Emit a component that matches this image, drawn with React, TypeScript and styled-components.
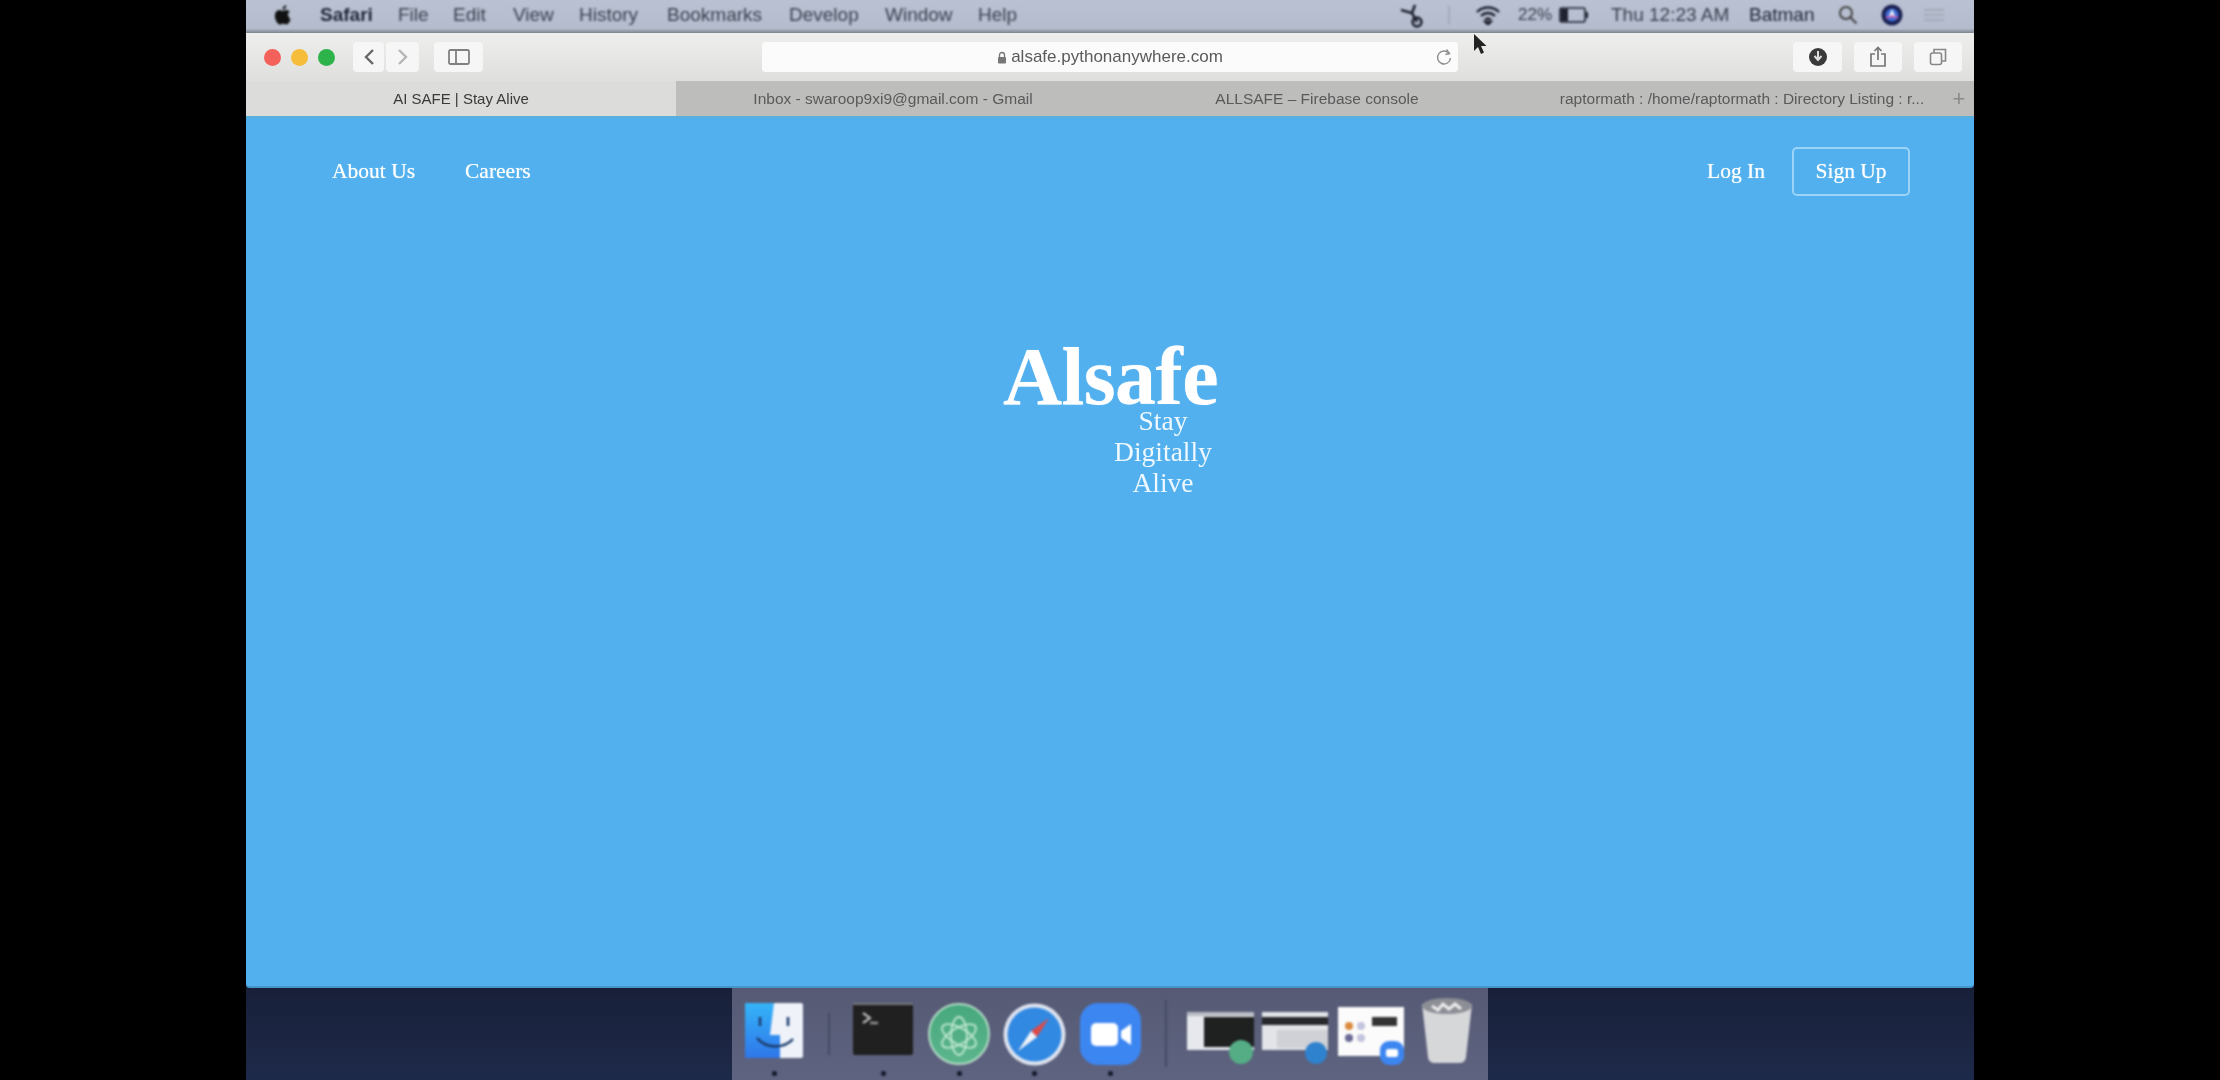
import React from "react";
import styled, { createGlobalStyle } from "styled-components";

const Global = createGlobalStyle`
  html, body { margin: 0; padding: 0; background: #000; }
  * { box-sizing: border-box; }
`;

const Screen = styled.div`
  width: 2220px; height: 1080px; background: #000; display: flex; justify-content: center; overflow: hidden;
`;
const Desktop = styled.div`
  width: 1728px; height: 1080px; display: flex; flex-direction: column;
  background: #1c2540;
`;
const MenuBar = styled.div`
  height: 33px; flex: none; display: flex;
  background: linear-gradient(#b9c1d2, #b4bccd 86%, #7d8490);
`;
const MenuContent = styled.div`
  flex: 1; display: flex; align-items: center; padding: 0 30px 4px 26px;
  font: 19px "Liberation Sans", sans-serif; color: #3c4150; filter: blur(0.8px);
`;
const MenuItem = styled.span<{ $bold?: boolean; $dark?: boolean; $w: number; $size?: number }>`
  width: ${p => p.$w}px; font-weight: ${p => (p.$bold ? 700 : 400)}; white-space: nowrap; flex: none;
  color: ${p => (p.$bold || p.$dark ? "#22263a" : "#3c4150")};
  font-size: ${p => p.$size ?? 19}px;
`;
const MenuGlyph = styled.svg<{ $mr?: number }>`
  flex: none; margin-right: ${p => p.$mr ?? 0}px;
`;
const MenuSep = styled.span`
  width: 2px; height: 18px; background: #a4abbb; margin: 0 25px; flex: none;
`;
const Spacer = styled.div`flex: 1;`;
const Toolbar = styled.div`
  height: 48px; flex: none; display: flex;
  background: linear-gradient(#eeefed, #dfe0de);
`;
const ToolContent = styled.div`
  flex: 1; display: flex; align-items: center; padding: 0 12px 0 18px; position: relative; filter: blur(0.6px);
`;
const Light = styled.span<{ $c: string; $mr: number }>`
  width: 17px; height: 17px; border-radius: 50%; background: ${p => p.$c}; margin-right: ${p => p.$mr}px; flex: none;
`;
const ToolBtn = styled.div<{ $w: number; $mr?: number }>`
  width: ${p => p.$w}px; height: 30px; background: #f6f6f6; border-radius: 4px; display: flex; align-items: center; justify-content: center;
  margin-right: ${p => p.$mr ?? 0}px; flex: none; color: #666;
`;
const Address = styled.div`
  width: 696px; height: 30px; margin-left: 279px; background: #fbfbfb; border-radius: 4px; display: flex; align-items: center; justify-content: center;
  font: 17px "Liberation Sans", sans-serif; color: #5a5a5a; position: relative; flex: none; gap: 4px;
`;
const Reload = styled.span`
  position: absolute; right: 5px; top: 6px; display: flex; color: #8a8a8a;
`;
const Cursor = styled.svg`
  position: absolute; left: 1226px; top: 0;
`;
const TabBar = styled.div`
  height: 35px; flex: none; display: flex; background: #bdbdbc;
`;
const TabContent = styled.div`
  flex: 1; display: flex; font: 15.5px "Liberation Sans", sans-serif; color: #5a5a5a; filter: blur(0.7px);
`;
const Tab = styled.div<{ $active?: boolean; $w: number; $pl?: number }>`
  width: ${p => p.$w}px; flex: none; display: flex; align-items: center; justify-content: center; white-space: nowrap;
  padding-left: ${p => p.$pl ?? 0}px;
  background: ${p => (p.$active ? "#dcdcda" : "transparent")}; color: ${p => (p.$active ? "#3a3a3a" : "#5a5a5a")};
  font-size: ${p => (p.$active ? 15 : 15.5)}px;
`;
const Plus = styled.div`flex: 1; display: flex; align-items: center; justify-content: center; font-size: 22px; color: #8a8a8a;`;
const Page = styled.main`
  height: 872px; flex: none; background: #52b0ee; position: relative; color: #fff;
  font-family: "Liberation Serif", serif; border-top: 2px solid #5eaedb; border-bottom: 2px solid #4596cf;
  border-radius: 0 0 4px 4px;
`;
const Nav = styled.nav`
  display: flex; align-items: center; padding: 29px 64px 0 86px; font-size: 21.5px; filter: blur(0.6px);
  text-shadow: 0 0 1px rgba(255, 255, 255, 0.7);
`;
const NavLink = styled.span<{ $mr: number }>`
  margin-right: ${p => p.$mr}px; white-space: nowrap;
`;
const SignUp = styled.span`
  width: 118px; height: 49px; border: 2px solid #9bd4f8; border-radius: 5px; display: flex; align-items: center; justify-content: center; white-space: nowrap;
`;
const Hero = styled.div`
  position: absolute; left: 757px; top: 216px; width: 240px; filter: blur(0.6px);
`;
const Title = styled.h1`
  margin: 0; font-size: 82px; font-weight: 700; line-height: 86px; height: 71px; letter-spacing: -0.6px; white-space: nowrap;
  text-shadow: 0 0 1px rgba(255, 255, 255, 0.6);
`;
const Tagline = styled.div`
  margin-left: 105px; width: 110px; text-align: center; font-size: 27.5px; line-height: 31px; color: #eef8fe;
`;
const DockArea = styled.div`
  flex: 1; display: flex; justify-content: center; background: linear-gradient(#182039, #1e2a4a);
`;
const Dock = styled.div`
  width: 756px; height: 100%; background: linear-gradient(#565a74, #5e6380); display: flex;
`;
const DockContent = styled.div`
  flex: 1; display: flex; padding-left: 13px; filter: blur(0.8px);
`;
const Slot = styled.div<{ $w: number; $ml?: number; $t: number }>`
  width: ${p => p.$w}px; margin-left: ${p => p.$ml ?? 0}px; padding-top: ${p => p.$t}px; flex: none; position: relative;
  display: flex; justify-content: center; align-items: flex-start;
`;
const Dot = styled.span`
  position: absolute; left: 50%; margin-left: -2.5px; bottom: 4px; width: 5px; height: 5px; border-radius: 50%; background: #15182a;
`;
const Divider = styled.span<{ $ml: number; $t: number; $h: number }>`
  width: 2px; height: ${p => p.$h}px; margin: ${p => p.$t}px 0 0 ${p => p.$ml}px; background: #454a66; flex: none;
`;

export default function App() {
  return (
    <Screen>
      <Global />
      <Desktop>
        <MenuBar>
          <MenuContent>
            <MenuGlyph $mr={26} width="22" height="24" viewBox="0 0 24 24">
              <path fill="#111" d="M17.05 12.5c0-2.6 2.1-3.8 2.2-3.9-1.2-1.8-3.1-2-3.7-2-1.6-.2-3.1.9-3.9.9s-2.1-.9-3.4-.9c-1.7 0-3.4 1-4.3 2.6-1.8 3.2-.5 7.9 1.3 10.5.9 1.3 2 2.7 3.3 2.7s1.9-.9 3.5-.9 2.1.9 3.5.8c1.5 0 2.4-1.3 3.3-2.6 1-1.5 1.4-3 1.5-3-.1 0-2.3-1-2.3-4.2zM14.5 4.6c.7-.9 1.2-2.1 1.1-3.3-1 0-2.3.7-3 1.6-.7.8-1.3 2-1.1 3.2 1.1.1 2.3-.6 3-1.5z" />
            </MenuGlyph>
            <MenuItem $bold $w={78}>Safari</MenuItem>
            <MenuItem $w={55}>File</MenuItem>
            <MenuItem $w={60}>Edit</MenuItem>
            <MenuItem $w={66}>View</MenuItem>
            <MenuItem $w={88}>History</MenuItem>
            <MenuItem $w={122}>Bookmarks</MenuItem>
            <MenuItem $w={96}>Develop</MenuItem>
            <MenuItem $w={93}>Window</MenuItem>
            <MenuItem $w={44}>Help</MenuItem>
            <Spacer />
            <MenuGlyph width="24" height="26" viewBox="0 0 24 26" fill="none" stroke="#1f2230" strokeWidth="2.6">
              <path d="M2 8l11 3 5 9M16 3l-3 8" />
              <circle cx="18" cy="20" r="4.4" />
            </MenuGlyph>
            <MenuSep />
            <MenuGlyph $mr={17} width="26" height="20" viewBox="0 0 26 20" fill="none" stroke="#1f2230" strokeWidth="2.4">
              <path d="M2 7c6-6 16-6 22 0M6 11c4-4 10-4 14 0M10 15c2-2 4-2 6 0" />
              <path d="M13 19.5l-2.5-2.5h5z" fill="#1f2230" />
            </MenuGlyph>
            <MenuItem $w={41} $size={17}>22%</MenuItem>
            <MenuGlyph $mr={22} width="30" height="16" viewBox="0 0 30 16">
              <rect x="1" y="1" width="25" height="14" rx="2" fill="none" stroke="#1f2230" strokeWidth="1.6" />
              <rect x="2" y="2" width="7" height="12" fill="#1f2230" />
              <rect x="27" y="5" width="2" height="6" fill="#1f2230" />
            </MenuGlyph>
            <MenuItem $w={138}>Thu 12:23 AM</MenuItem>
            <MenuItem $dark $w={89}>Batman</MenuItem>
            <MenuGlyph $mr={23} width="20" height="20" viewBox="0 0 20 20" fill="none" stroke="#444" strokeWidth="2">
              <circle cx="8" cy="8" r="6" /><path d="M12.5 12.5l6 6" />
            </MenuGlyph>
            <MenuGlyph $mr={21} width="22" height="22" viewBox="0 0 22 22">
              <circle cx="11" cy="11" r="10.5" fill="#1b2152" />
              <circle cx="11" cy="11" r="6.5" fill="#3f6fd8" />
              <path d="M11 5l3.6 8H7.4z" fill="#e9edf8" />
              <path d="M5 14c3-2 9-2 12 0" stroke="#c95bb0" strokeWidth="2" fill="none" />
            </MenuGlyph>
            <MenuGlyph width="20" height="14" viewBox="0 0 20 14" stroke="#a4abb9" strokeWidth="2">
              <path d="M0 2h20M0 7h20M0 12h20" />
            </MenuGlyph>
          </MenuContent>
        </MenuBar>
        <Toolbar>
          <ToolContent>
            <Light $c="#f4605a" $mr={10} />
            <Light $c="#f5bd3a" $mr={10} />
            <Light $c="#2eb24a" $mr={18} />
            <ToolBtn $w={31} $mr={2}>
              <svg width="12" height="20" viewBox="0 0 12 20" fill="none" stroke="#666" strokeWidth="2.4"><path d="M10 3L3 10l7 7" /></svg>
            </ToolBtn>
            <ToolBtn $w={33} $mr={15}>
              <svg width="12" height="20" viewBox="0 0 12 20" fill="none" stroke="#b5b5b5" strokeWidth="2.4"><path d="M2 3l7 7-7 7" /></svg>
            </ToolBtn>
            <ToolBtn $w={49}>
              <svg width="22" height="16" viewBox="0 0 22 16" fill="none" stroke="#808080" strokeWidth="1.8"><rect x="1" y="1" width="20" height="14" rx="1.5" /><path d="M8 1v14" /></svg>
            </ToolBtn>
            <Address>
              <svg width="10" height="13" viewBox="0 0 10 13"><path d="M2.5 6V4a2.5 2.5 0 015 0v2" fill="none" stroke="#777" strokeWidth="1.3" /><rect x="1" y="6" width="8" height="6.5" rx="1" fill="#777" /></svg>
              alsafe.pythonanywhere.com
              <Reload>
                <svg width="18" height="18" viewBox="0 0 18 18" fill="none" stroke="#8d8d8d" strokeWidth="1.4"><path d="M14.5 6A6.5 6.5 0 1015.5 10" /><path d="M11.5 1.5l3 4-4 1" /></svg>
              </Reload>
            </Address>
            <Cursor width="16" height="24" viewBox="0 0 16 24">
              <path d="M2 1v17l4-4 3 7 3-1.5-3-6.5h5.5z" fill="#222" />
            </Cursor>
            <Spacer />
            <ToolBtn $w={49} $mr={12}>
              <svg width="20" height="20" viewBox="0 0 20 20"><circle cx="10" cy="10" r="9" fill="#3a3a3a" /><path d="M10 4v8M6.5 9l3.5 4 3.5-4" fill="none" stroke="#ddd" strokeWidth="2" /></svg>
            </ToolBtn>
            <ToolBtn $w={48} $mr={12}>
              <svg width="18" height="22" viewBox="0 0 18 22" fill="none" stroke="#777" strokeWidth="1.7"><path d="M6 8H2v12h14V8h-4M9 14V2M5.5 5L9 1.5 12.5 5" /></svg>
            </ToolBtn>
            <ToolBtn $w={48}>
              <svg width="18" height="18" viewBox="0 0 18 18" fill="none" stroke="#888" strokeWidth="1.6"><rect x="1.5" y="5" width="11" height="11.5" rx="2" /><path d="M5 5V1.5h11.5V13H13" /></svg>
            </ToolBtn>
          </ToolContent>
        </Toolbar>
        <TabBar>
          <TabContent>
            <Tab $active $w={430}>AI SAFE | Stay Alive</Tab>
            <Tab $w={434}>Inbox - swaroop9xi9@gmail.com - Gmail</Tab>
            <Tab $w={414}>ALLSAFE – Firebase console</Tab>
            <Tab $w={420} $pl={16}>raptormath : /home/raptormath : Directory Listing : r...</Tab>
            <Plus>+</Plus>
          </TabContent>
        </TabBar>
        <Page>
          <Nav>
            <NavLink $mr={50}>About Us</NavLink>
            <NavLink $mr={0}>Careers</NavLink>
            <Spacer />
            <NavLink $mr={27}>Log In</NavLink>
            <SignUp>Sign Up</SignUp>
          </Nav>
          <Hero>
            <Title>Alsafe</Title>
            <Tagline>Stay<br />Digitally<br />Alive</Tagline>
          </Hero>
        </Page>
        <DockArea>
          <Dock>
            <DockContent>
              <Slot $w={58} $t={15}>
                <svg width="58" height="55" viewBox="0 0 58 55">
                  <defs>
                    <linearGradient id="finderBlue" x1="0" y1="0" x2="0" y2="1">
                      <stop offset="0" stopColor="#35b4f8" />
                      <stop offset="1" stopColor="#2f76ea" />
                    </linearGradient>
                  </defs>
                  <rect width="58" height="55" rx="2" fill="#eff2f9" />
                  <path d="M0 0h29l-4 32h10v23H0z" fill="url(#finderBlue)" />
                  <path d="M15 14v9M43 14v9" stroke="#1d3f70" strokeWidth="2.6" />
                  <path d="M12 35c9 11 27 11 36 1" fill="none" stroke="#1d3f70" strokeWidth="2.6" />
                </svg>
                <Dot />
              </Slot>
              <Divider $ml={25} $t={25} $h={42} />
              <Slot $w={60} $ml={23} $t={15}>
                <svg width="60" height="52" viewBox="0 0 60 52">
                  <rect width="60" height="52" rx="2" fill="#202020" />
                  <rect width="60" height="2" fill="#77777c" />
                  <path d="M10 10l7 5-7 5" fill="none" stroke="#b8b8b8" strokeWidth="2.2" />
                  <path d="M17 20h8" stroke="#8f8f8f" strokeWidth="2.6" />
                </svg>
                <Dot />
              </Slot>
              <Slot $w={62} $ml={15} $t={15}>
                <svg width="62" height="62" viewBox="0 0 62 62">
                  <defs>
                    <linearGradient id="atomG" x1="0" y1="0" x2="0" y2="1">
                      <stop offset="0" stopColor="#46a77d" />
                      <stop offset="1" stopColor="#5db68d" />
                    </linearGradient>
                  </defs>
                  <circle cx="31" cy="31" r="30" fill="url(#atomG)" stroke="#b3dcc6" strokeWidth="2" />
                  <g fill="none" stroke="#bfe8d0" strokeWidth="1.8">
                    <ellipse cx="31" cy="33" rx="19" ry="8" transform="rotate(30 31 33)" />
                    <ellipse cx="31" cy="33" rx="19" ry="8" transform="rotate(-30 31 33)" />
                    <ellipse cx="31" cy="33" rx="19" ry="8" transform="rotate(90 31 33)" />
                  </g>
                </svg>
                <Dot />
              </Slot>
              <Slot $w={63} $ml={13} $t={15}>
                <svg width="63" height="63" viewBox="0 0 63 63">
                  <circle cx="31.5" cy="31.5" r="31" fill="#dfe4f0" />
                  <circle cx="31.5" cy="31.5" r="27" fill="#3189e2" />
                  <path d="M46 15L28 28l6 6z" fill="#dd4a48" />
                  <path d="M15 48l13-20 6 6z" fill="#f1f3f8" />
                </svg>
                <Dot />
              </Slot>
              <Slot $w={61} $ml={14} $t={15}>
                <svg width="61" height="62" viewBox="0 0 61 62">
                  <rect width="61" height="62" rx="18" fill="#3c86f2" />
                  <rect x="11" y="20" width="27" height="23" rx="5" fill="#fff" />
                  <path d="M41 28l10-7v21l-10-7z" fill="#fff" />
                </svg>
                <Dot />
              </Slot>
              <Divider $ml={24} $t={12} $h={67} />
              <Slot $w={68} $ml={20} $t={24}>
                <svg width="68" height="52" viewBox="0 0 68 52">
                  <rect y="0" width="67" height="38" fill="#e6e8ee" />
                  <rect y="0" width="67" height="4" fill="#b9bcc4" />
                  <rect x="17" y="5" width="50" height="30" fill="#1f2020" />
                  <circle cx="54" cy="40" r="12" fill="#55ad85" />
                </svg>
              </Slot>
              <Slot $w={66} $ml={7} $t={24}>
                <svg width="66" height="52" viewBox="0 0 66 52">
                  <rect y="0" width="66" height="38" fill="#e2e4e8" />
                  <rect y="5" width="66" height="8" fill="#26282c" />
                  <rect x="15" y="18" width="51" height="18" fill="#cfd1d6" />
                  <circle cx="54" cy="41" r="11" fill="#2f82cd" />
                </svg>
              </Slot>
              <Slot $w={66} $ml={10} $t={19}>
                <svg width="66" height="58" viewBox="0 0 66 58">
                  <rect width="66" height="49" fill="#fbfbfb" />
                  <rect x="34" y="10" width="25" height="9" fill="#333" />
                  <circle cx="11" cy="19" r="4" fill="#dc8b3e" />
                  <circle cx="23" cy="19" r="4" fill="#c3c4de" />
                  <circle cx="11" cy="31" r="4" fill="#6a6a94" />
                  <circle cx="23" cy="31" r="4" fill="#c3c4de" />
                  <rect x="42" y="34" width="24" height="24" rx="9" fill="#3c86f2" />
                  <rect x="48" y="42" width="12" height="8" rx="2" fill="#fff" />
                </svg>
              </Slot>
              <Slot $w={50} $ml={18} $t={10}>
                <svg width="50" height="65" viewBox="0 0 50 65">
                  <path d="M0 6h50l-6 53a6 6 0 01-6 6H12a6 6 0 01-6-6z" fill="#d6d7d9" />
                  <ellipse cx="25" cy="8" rx="25" ry="8" fill="#8d8f96" />
                  <path d="M10 8l6 4 5-6 6 5 6-5 6 5" stroke="#eee" strokeWidth="3" fill="none" />
                </svg>
              </Slot>
            </DockContent>
          </Dock>
        </DockArea>
      </Desktop>
    </Screen>
  );
}
